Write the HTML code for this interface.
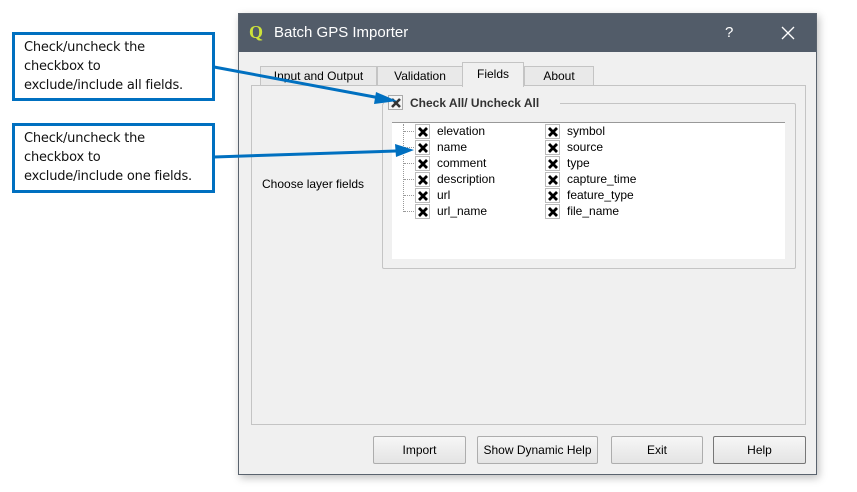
<!DOCTYPE html>
<html><head><meta charset="utf-8"><style>
*{box-sizing:border-box;margin:0;padding:0}
body{width:857px;height:492px;background:#fff;position:relative;overflow:hidden;font-family:"Liberation Sans",Tahoma,sans-serif;font-size:12px;color:#000}
.abs{position:absolute}
.dlg{left:238px;top:13px;width:579px;height:462px;background:#f0f0f0;border:1px solid #5a636e;box-shadow:2px 3px 8px rgba(0,0,0,.25)}
.title{left:0;top:0;width:577px;height:38px;background:#525c69;color:#fff;font-size:15px}
.tab{top:52px;height:20px;border:1px solid #c4c4c4;border-bottom:none;background:#e9e9e9;text-align:center;line-height:19px;font-size:12px}
.panel{left:12px;top:71px;width:555px;height:340px;border:1px solid #c4c4c4;background:#f0f0f0}
.btn{top:422px;height:28px;border:1px solid #adadad;border-radius:2px;background:linear-gradient(#f6f6f6,#e4e4e4);text-align:center;line-height:26px;font-size:12px}
.cb{width:15px;height:15px;border:1px solid #bbb;background:#fff}
.cb svg{position:absolute;left:1px;top:1px}
.call{border:3px solid #0070c0;background:#fff;font-family:"DejaVu Sans",sans-serif;font-size:13px;line-height:19px;padding:3px 9px;color:#111;white-space:nowrap;letter-spacing:-0.2px}
.item{height:16px;line-height:16px;font-size:12px}
.h{position:absolute;width:12px;border-top:1px dotted #999}
</style></head><body>
<div class="abs dlg">
 <div class="abs title">
  <div class="abs" style="left:10px;top:8px;width:16px;height:20px;color:#cde23a;font-weight:bold;font-size:18px;font-family:'Liberation Serif',serif">Q</div>
  <div class="abs" style="left:35px;top:10px">Batch GPS Importer</div>
  <div class="abs" style="left:486px;top:10px;font-size:15px">?</div>
  <svg class="abs" style="left:542px;top:12px" width="14" height="14"><path d="M1 1L13 13M13 1L1 13" stroke="#fff" stroke-width="1.3"/></svg>
 </div>
 <div class="abs tab" style="left:21px;width:117px">Input and Output</div>
 <div class="abs tab" style="left:138px;width:86px">Validation</div>
 <div class="abs tab" style="left:285px;width:70px">About</div>
 <div class="abs panel">
  <div class="abs" style="left:10px;top:91px">Choose layer fields</div>
  <div class="abs" style="left:130px;top:17px;width:414px;height:166px;border:1px solid #c4c4c4;border-radius:2px"></div>
  <div class="abs" style="left:132px;top:8px;background:#f0f0f0;width:176px;height:18px"></div>
  <div class="abs" style="left:158px;top:10px;font-weight:bold;color:#333">Check All/ Uncheck All</div>
  <div class="abs" style="left:140px;top:36px;width:393px;height:137px;background:#fff;border-top:1px solid #999"></div>
 </div>
 <div class="abs tab" style="left:223px;top:48px;width:62px;height:25px;background:#f0f0f0;line-height:22px">Fields</div>
 <div class="abs btn" style="left:134px;width:93px">Import</div>
 <div class="abs btn" style="left:238px;width:121px">Show Dynamic Help</div>
 <div class="abs btn" style="left:372px;width:92px">Exit</div>
 <div class="abs btn" style="left:474px;width:93px;border-color:#777">Help</div>
</div>
<div class="abs cb" style="left:388px;top:95px;border-color:#aaa;background:#f4f4f4"><svg width="12" height="12"><path d="M2 2L10 10M10 2L2 10" stroke="#333" stroke-width="2.6"/></svg></div>
<div class="abs" style="left:403px;top:124px;width:1px;height:88px;border-left:1px dotted #999"></div>
<div class="h" style="left:404px;top:131px"></div><div class="h" style="left:404px;top:147px"></div><div class="h" style="left:404px;top:163px"></div><div class="h" style="left:404px;top:179px"></div><div class="h" style="left:404px;top:195px"></div><div class="h" style="left:404px;top:211px"></div>
<div class="abs" style="left:415px;top:124px">
 <div class="abs cb" style="left:0;top:0"><svg width="12" height="12"><path d="M2 2L10 10M10 2L2 10" stroke="#000" stroke-width="2.8"/></svg></div><div class="abs item" style="left:22px;top:-1px">elevation</div>
 <div class="abs cb" style="left:0;top:16px"><svg width="12" height="12"><path d="M2 2L10 10M10 2L2 10" stroke="#000" stroke-width="2.8"/></svg></div><div class="abs item" style="left:22px;top:15px">name</div>
 <div class="abs cb" style="left:0;top:32px"><svg width="12" height="12"><path d="M2 2L10 10M10 2L2 10" stroke="#000" stroke-width="2.8"/></svg></div><div class="abs item" style="left:22px;top:31px">comment</div>
 <div class="abs cb" style="left:0;top:48px"><svg width="12" height="12"><path d="M2 2L10 10M10 2L2 10" stroke="#000" stroke-width="2.8"/></svg></div><div class="abs item" style="left:22px;top:47px">description</div>
 <div class="abs cb" style="left:0;top:64px"><svg width="12" height="12"><path d="M2 2L10 10M10 2L2 10" stroke="#000" stroke-width="2.8"/></svg></div><div class="abs item" style="left:22px;top:63px">url</div>
 <div class="abs cb" style="left:0;top:80px"><svg width="12" height="12"><path d="M2 2L10 10M10 2L2 10" stroke="#000" stroke-width="2.8"/></svg></div><div class="abs item" style="left:22px;top:79px">url_name</div>
 <div class="abs cb" style="left:130px;top:0"><svg width="12" height="12"><path d="M2 2L10 10M10 2L2 10" stroke="#000" stroke-width="2.8"/></svg></div><div class="abs item" style="left:152px;top:-1px">symbol</div>
 <div class="abs cb" style="left:130px;top:16px"><svg width="12" height="12"><path d="M2 2L10 10M10 2L2 10" stroke="#000" stroke-width="2.8"/></svg></div><div class="abs item" style="left:152px;top:15px">source</div>
 <div class="abs cb" style="left:130px;top:32px"><svg width="12" height="12"><path d="M2 2L10 10M10 2L2 10" stroke="#000" stroke-width="2.8"/></svg></div><div class="abs item" style="left:152px;top:31px">type</div>
 <div class="abs cb" style="left:130px;top:48px"><svg width="12" height="12"><path d="M2 2L10 10M10 2L2 10" stroke="#000" stroke-width="2.8"/></svg></div><div class="abs item" style="left:152px;top:47px">capture_time</div>
 <div class="abs cb" style="left:130px;top:64px"><svg width="12" height="12"><path d="M2 2L10 10M10 2L2 10" stroke="#000" stroke-width="2.8"/></svg></div><div class="abs item" style="left:152px;top:63px">feature_type</div>
 <div class="abs cb" style="left:130px;top:80px"><svg width="12" height="12"><path d="M2 2L10 10M10 2L2 10" stroke="#000" stroke-width="2.8"/></svg></div><div class="abs item" style="left:152px;top:79px">file_name</div>
</div>
<div class="abs call" style="left:12px;top:32px;width:203px;height:69px">Check/uncheck the<br>checkbox to<br>exclude/include all fields.</div>
<div class="abs call" style="left:12px;top:123px;width:203px;height:70px">Check/uncheck the<br>checkbox to<br>exclude/include one fields.</div>
<svg class="abs" style="left:0;top:0" width="857" height="492">
 <line x1="214" y1="67" x2="380" y2="98" stroke="#0070c0" stroke-width="3"/>
 <polygon points="397,101 376,92 374,104" fill="#0070c0"/>
 <line x1="214" y1="157" x2="396" y2="151" stroke="#0070c0" stroke-width="3"/>
 <polygon points="414,150 395,144 396,157" fill="#0070c0"/>
</svg>
</body></html>
